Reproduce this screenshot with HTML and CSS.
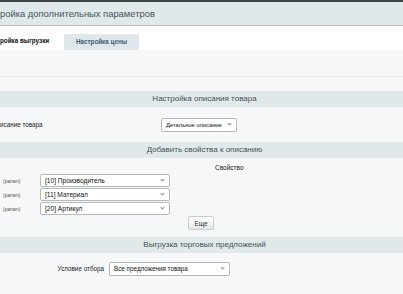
FILE: index.html
```html
<!DOCTYPE html>
<html>

<head>
  <meta charset="utf-8">
  <title>Настройка дополнительных параметров</title>
  <link rel="stylesheet" href="styles.css">
</head>

<body>
  <div class="topline"></div>
  <div class="title">ройка дополнительных параметров</div>

  <div class="tabs">
    <div class="tab active">ройка выгрузки</div>
    <div class="tab">Настройка цены</div>
  </div>

  <div class="panel">
    <div class="band"></div>

    <div class="head">Настройка описания товара</div>
    <div class="row desc-row">
      <span class="desc-label">исание товара</span>
      <div class="sel sel-desc">Детальное описание</div>
    </div>

    <div class="head">Добавить свойства к описанию</div>
    <div class="prop-title">Свойство</div>
    <div class="props">
      <div class="prop">
        <span class="param">(param)</span>
        <div class="sel sel-prop">[10] Производитель</div>
      </div>
      <div class="prop">
        <span class="param">(param)</span>
        <div class="sel sel-prop">[11] Материал</div>
      </div>
      <div class="prop">
        <span class="param">(param)</span>
        <div class="sel sel-prop">[20] Артикул</div>
      </div>
    </div>
    <div class="more-row">
      <button class="btn">Еще</button>
    </div>

    <div class="head">Выгрузка торговых предложений</div>
    <div class="row cond-row">
      <span class="cond-label">Условие отбора</span>
      <div class="sel sel-cond">Все предложения товара</div>
    </div>
  </div>
</body>

</html>
```

FILE: styles.css
```css
body {
  margin: 0;
  width: 403px;
  height: 294px;
  overflow: hidden;
  background: #f5f7f8;
  font-family: "Liberation Sans", Arial, sans-serif;
  color: #222;
}

.topline {
  height: 2px;
  background: #3b4347;
}

.title {
  height: 23px;
  line-height: 23px;
  background: #e0e8ea;
  border-bottom: 1px solid #b7bec1;
  font-size: 9.4px;
  color: #46535b;
  white-space: nowrap;
}

.tabs {
  display: flex;
  align-items: flex-end;
  gap: 4px;
  height: 24px;
  background: #fff;
}

.tab {
  height: 16px;
  line-height: 16px;
  width: 75px;
  background: #dfe7ea;
  font-size: 6.3px;
  font-weight: bold;
  text-align: center;
  color: #3e5b78;
}

.tab.active {
  width: 60px;
  height: 17px;
  background: #fff;
  color: #111;
  text-align: left;
}

.panel {
  background: #f5f7f8;
}

.band {
  height: 26px;
  border-bottom: 1px solid #e3e7e9;
  margin-bottom: 14px;
}

.head {
  height: 16px;
  line-height: 16px;
  background: #e0e8ea;
  text-align: center;
  font-size: 8px;
  color: #44525a;
  padding-left: 6px;
}

.row {
  display: flex;
  align-items: center;
  font-size: 6.3px;
}

.desc-row {
  height: 35px;
}

.desc-label {
  width: 161px;
}

.sel {
  position: relative;
  box-sizing: border-box;
  height: 14px;
  line-height: 12px;
  background: #fff;
  border: 1px solid #b3babe;
  border-radius: 2px;
  font-size: 6.3px;
  padding-left: 4px;
  white-space: nowrap;
  color: #111;
}

.sel::after {
  content: "";
  position: absolute;
  right: 5px;
  top: 3px;
  width: 2px;
  height: 2px;
  border-right: 1px solid #888;
  border-bottom: 1px solid #888;
  transform: rotate(45deg);
}

.sel-desc {
  width: 76px;
  font-size: 5.8px;
}

.prop-title {
  height: 14px;
  line-height: 20px;
  padding-left: 215px;
  font-size: 6.5px;
  margin-bottom: 2px;
}

.props {
  display: flex;
  flex-direction: column;
  gap: 1px;
}

.prop {
  display: flex;
  align-items: center;
}

.param {
  width: 40px;
  padding-left: 3px;
  box-sizing: border-box;
  font-size: 5px;
  color: #555;
}

.sel-prop {
  width: 130px;
  height: 13px;
  line-height: 11px;
  font-size: 6.6px;
}

.more-row {
  height: 15px;
  display: flex;
  align-items: flex-end;
  padding-left: 188px;
  margin-bottom: 7px;
}

.btn {
  width: 26px;
  height: 14px;
  padding: 0;
  border: 1px solid #c6cdd0;
  border-radius: 2px;
  background: linear-gradient(#ffffff, #e4e9eb);
  font-family: inherit;
  font-size: 6.5px;
  color: #333;
}

.cond-row {
  height: 31px;
}

.cond-label {
  width: 104px;
  padding-right: 5px;
  text-align: right;
}

.sel-cond {
  width: 121px;
}
```
